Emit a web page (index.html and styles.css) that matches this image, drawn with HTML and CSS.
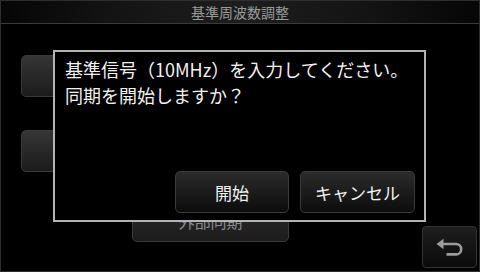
FILE: index.html
```html
<!DOCTYPE html>
<html lang="ja">
<head>
<meta charset="utf-8">
<title>基準周波数調整</title>
<link rel="stylesheet" href="styles.css">
</head>
<body>
<div class="screen">
  <header class="titlebar">基準周波数調整</header>
  <main class="content">
    <div class="bg-btn btn-a"></div>
    <div class="bg-btn btn-b"></div>
    <div class="bg-btn btn-c">外部同期</div>
    <button class="back-btn" type="button" aria-label="戻る">
      <svg width="55" height="42" viewBox="0 0 55 42" aria-hidden="true">
        <polygon points="14.5,18 21.5,12.8 21.5,23.2" fill="#9c9c9c"/>
        <path d="M20 18 H34 A5.2 5.2 0 0 1 34 28.4 H24.5" fill="none" stroke="#9c9c9c" stroke-width="2.6"/>
      </svg>
    </button>
  </main>
  <div class="dialog">
    <p class="dialog-text">基準信号（10MHz）を入力してください。<br>同期を開始しますか？</p>
    <div class="dialog-actions">
      <button class="dlg-btn ok" type="button">開始</button>
      <button class="dlg-btn cancel" type="button">キャンセル</button>
    </div>
  </div>
</div>
</body>
</html>
```

FILE: styles.css
```css
* { box-sizing: border-box; }
html, body {
  margin: 0;
  padding: 0;
  background: #000;
}
body {
  width: 480px;
  height: 272px;
  overflow: hidden;
  font-family: "Noto Sans CJK JP", "Noto Sans", sans-serif;
}
.screen {
  position: relative;
  width: 480px;
  height: 272px;
  border: 1px solid #2e2e2e;
  background: #000;
  display: flex;
  flex-direction: column;
}
.titlebar {
  height: 23px;
  border-bottom: 1px solid #3a3a3a;
  background: linear-gradient(to right, #060606 0%, #141414 25%, #1e1e1e 50%, #141414 75%, #060606 100%);
  color: #9a9a9a;
  font-size: 14px;
  line-height: 22px;
  text-align: center;
}
.content {
  flex: 1;
  display: grid;
  grid-template-columns: 20px 111px 157px 133px 55px 2px;
  grid-template-rows: 31px 42px 33px 42px 28px 26px 16px 26px 3px;
}
.bg-btn {
  border: 1px solid #3a3a3a;
  border-radius: 5px;
  background: linear-gradient(#353535, #1b1b1b);
  color: #8a8a8a;
  font-size: 16px;
  display: flex;
  align-items: center;
  justify-content: center;
}
.btn-a { grid-column: 2 / 4; grid-row: 2; }
.btn-b { grid-column: 2 / 4; grid-row: 4; }
.btn-c { grid-column: 3; grid-row: 6 / 8; background: linear-gradient(#2c2c2c, #1c1c1c); }
.back-btn {
  grid-column: 5;
  grid-row: 7 / 9;
  margin: 0;
  padding: 0;
  border: 1px solid #333;
  border-radius: 4px;
  background: linear-gradient(#1e1e1e, #0b0b0b);
  display: block;
  width: 55px;
  height: 42px;
}
.back-btn svg { display: block; margin: -1px; }
.dialog {
  position: absolute;
  left: 52px;
  top: 49px;
  width: 373px;
  height: 172px;
  border: 2px solid #b4b4b4;
  background: #000;
  display: flex;
  flex-direction: column;
  padding: 4px 9px 7px 10px;
}
.dialog-text {
  margin: 0;
  color: #f2f2f2;
  font-size: 18px;
  line-height: 26px;
  white-space: nowrap;
}
.dialog-actions {
  margin-top: auto;
  display: flex;
  justify-content: flex-end;
  gap: 11px;
}
.dlg-btn {
  height: 42px;
  width: 114px;
  margin: 0;
  padding: 0;
  border: 1px solid #3a3a3a;
  border-radius: 5px;
  background: linear-gradient(#2b2b2b, #0c0c0c);
  color: #f2f2f2;
  font-family: "Noto Sans CJK JP", "Noto Sans", sans-serif;
  font-size: 17px;
}
.dlg-btn.cancel { width: 115px; }
```
